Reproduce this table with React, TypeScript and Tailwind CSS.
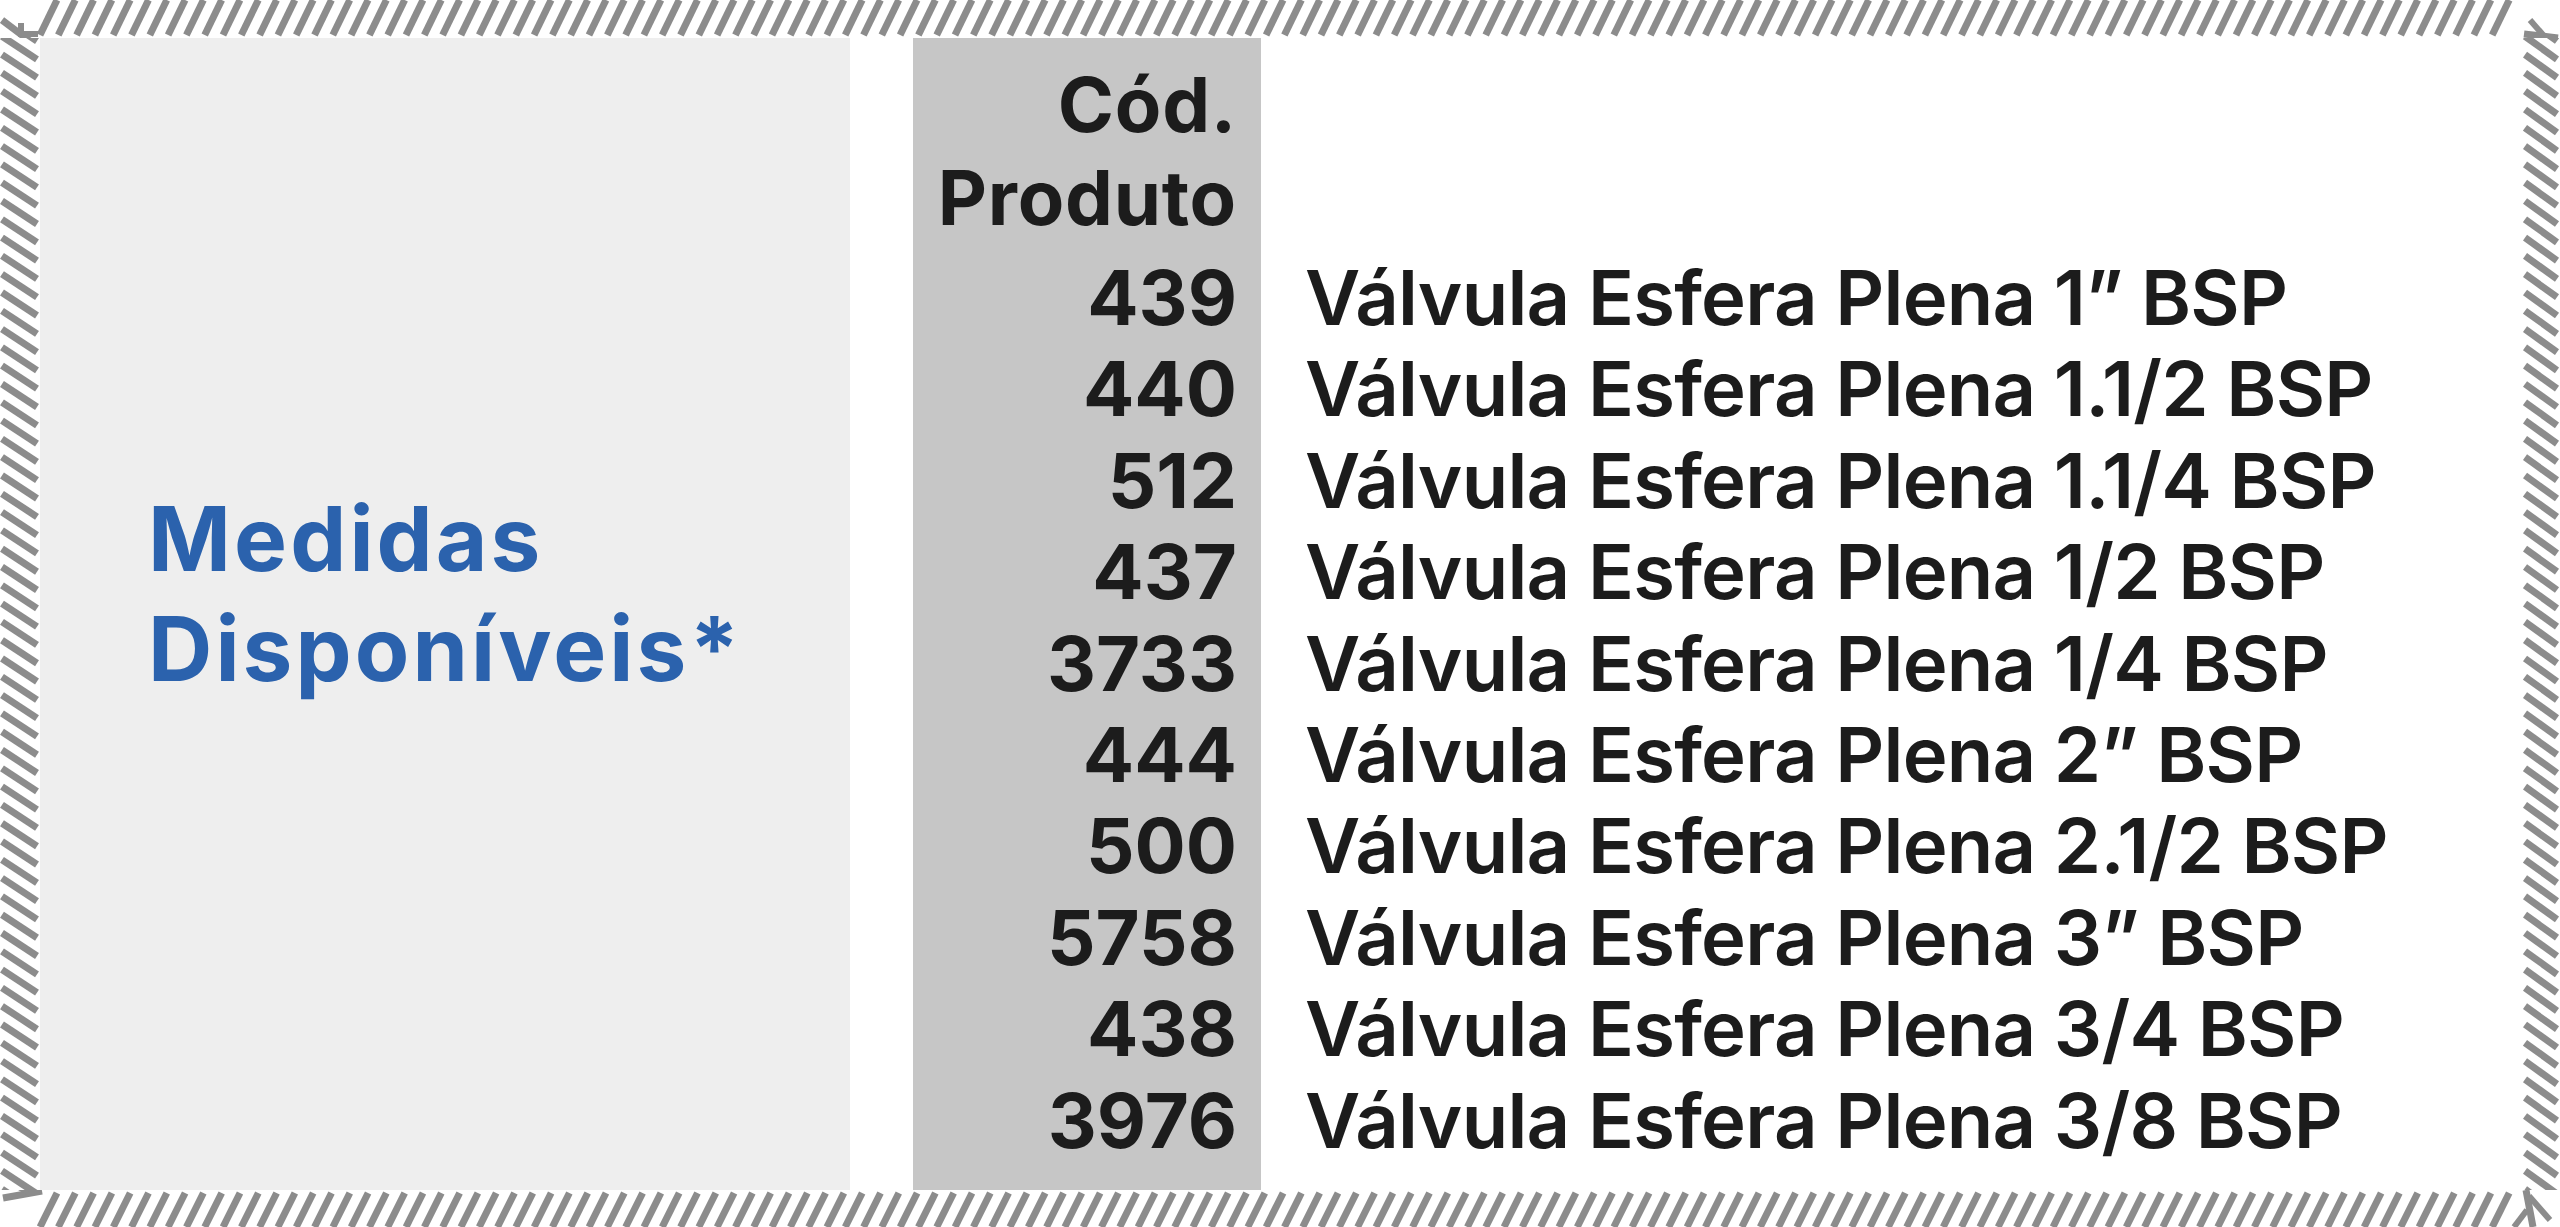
import React from 'react'

const products: [string, string][] = [
  ['439', 'Válvula Esfera Plena 1” BSP'],
  ['440', 'Válvula Esfera Plena 1.1/2 BSP'],
  ['512', 'Válvula Esfera Plena 1.1/4 BSP'],
  ['437', 'Válvula Esfera Plena 1/2 BSP'],
  ['3733', 'Válvula Esfera Plena 1/4 BSP'],
  ['444', 'Válvula Esfera Plena 2” BSP'],
  ['500', 'Válvula Esfera Plena 2.1/2 BSP'],
  ['5758', 'Válvula Esfera Plena 3” BSP'],
  ['438', 'Válvula Esfera Plena 3/4 BSP'],
  ['3976', 'Válvula Esfera Plena 3/8 BSP'],
]

const STRIPE = '#8c8c8c'
const STEP = 18.3

// hatched strip along the top / bottom edge ("/" stripes)
function HStrip({ height, top }: { height: number; top: boolean }) {
  const xs: number[] = []
  for (let x = 40; x < 2510; x += STEP) xs.push(x)
  return (
    <svg width={2560} height={height} className="block shrink-0">
      {xs.map((x, i) =>
        top ? (
          <line key={i} x1={x} y1={35} x2={x + 17} y2={0} stroke={STRIPE} strokeWidth={7} />
        ) : (
          <line key={i} x1={x} y1={37} x2={x + 17} y2={3} stroke={STRIPE} strokeWidth={7} />
        )
      )}
      {top ? (
        <>
          {/* top-left corner mark */}
          <line x1={2} y1={20} x2={35} y2={45} stroke={STRIPE} strokeWidth={7} />
          <line x1={21} y1={23} x2={21} y2={36} stroke={STRIPE} strokeWidth={6} />
          <line x1={18} y1={34} x2={38} y2={34} stroke={STRIPE} strokeWidth={6} />
          {/* top-right corner mark */}
          <line x1={2524} y1={34} x2={2558} y2={38} stroke={STRIPE} strokeWidth={7} />
          <line x1={2530} y1={20} x2={2544} y2={36} stroke={STRIPE} strokeWidth={6} />
        </>
      ) : (
        <>
          {/* bottom-left corner mark */}
          <line x1={3} y1={8} x2={42} y2={1} stroke={STRIPE} strokeWidth={7} />
          <line x1={6} y1={-10} x2={28} y2={2} stroke={STRIPE} strokeWidth={6} />
          {/* bottom-right corner mark */}
          <line x1={2526} y1={0} x2={2533} y2={37} stroke={STRIPE} strokeWidth={7} />
          <line x1={2514} y1={37} x2={2527} y2={20} stroke={STRIPE} strokeWidth={6} />
          <line x1={2529} y1={6} x2={2550} y2={30} stroke={STRIPE} strokeWidth={6} />
        </>
      )}
    </svg>
  )
}

// hatched strip along the left / right edge ("\" stripes)
function VStrip({ width }: { width: number }) {
  const ys: number[] = []
  for (let y = -20; y < 1160; y += STEP) ys.push(y)
  return (
    <svg width={width} height={1152} className="block shrink-0">
      {ys.map((y, i) => (
        <line key={i} x1={2} y1={y} x2={width - 3} y2={y + 23} stroke={STRIPE} strokeWidth={7} />
      ))}
    </svg>
  )
}

export default function App() {
  return (
    <div className="w-[2560px] h-[1227px] bg-white flex flex-col overflow-hidden font-[Inter,sans-serif]">
      <HStrip height={38} top />

      <div className="flex h-[1152px]">
        <VStrip width={40} />

        {/* content */}
        <div className="flex-1 flex">
          {/* Title panel */}
          <div className="w-[810px] bg-[#eeeeee] flex items-center pl-[108px] pb-[40px]">
            <h2 className="text-[89px] leading-[110px] font-bold text-[#2b62ad] tracking-[0.035em]">
              Medidas
              <br />
              Disponíveis*
            </h2>
          </div>

          <div className="w-[63px]" />

          {/* Codes column */}
          <div className="w-[348px] bg-[#c6c6c6] pt-[20px] pr-[24px] text-right text-[#1c1c1c] font-bold text-[76px]">
            <div className="leading-[93px] mb-[8px] tracking-[0.01em]">
              Cód.
              <br />
              Produto
            </div>
            {products.map(([code]) => (
              <div key={code} className="leading-[91.4px]">
                {code}
              </div>
            ))}
          </div>

          {/* Descriptions */}
          <div className="flex-1 pt-[20px] pl-[44px] text-[#1c1c1c] font-semibold text-[76px] tracking-[-0.01em]">
            <div className="h-[194px]" />
            {products.map(([code, name]) => (
              <div key={code} className="leading-[91.4px] whitespace-nowrap">
                {name}
              </div>
            ))}
          </div>
        </div>

        <VStrip width={37} />
      </div>

      <HStrip height={37} top={false} />
    </div>
  )
}
